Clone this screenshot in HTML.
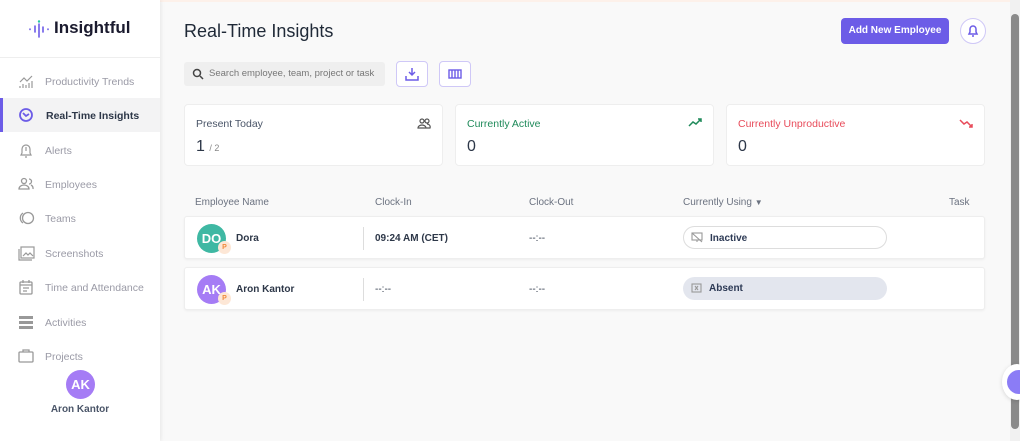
<!DOCTYPE html>
<html><head><style>
*{box-sizing:border-box;margin:0;padding:0}
body{width:1020px;height:441px;overflow:hidden;background:#f9f9f9;font-family:"Liberation Sans",sans-serif;position:relative;color:#2d3748}
.sb{position:absolute;left:0;top:0;width:160px;height:441px;background:#fff;box-shadow:1px 0 4px rgba(0,0,0,.08)}
.logo{position:absolute;left:0;top:0;width:160px;height:58px;border-bottom:1px solid #eee}
.logo span{position:absolute;left:54px;top:18px;font-size:17px;font-weight:bold;color:#1a1a2e}
.it{position:absolute;left:0;width:160px;height:34px;font-size:10.5px;color:#9a9aa6}
.it span{position:absolute;left:45px;top:12px}
.it svg{position:absolute;left:18px;top:9px}
.act{background:#f3f3f4;color:#2d3748;font-weight:bold;border-left:3px solid #6c5ce7}
.av{position:absolute;border-radius:50%;color:#fff;font-weight:bold;text-align:center}
.abs{position:absolute}
.card{position:absolute;top:104px;width:259px;height:62px;background:#fff;border:1px solid #eee;border-radius:4px}
.card .t{position:absolute;left:11px;top:13px;font-size:10.5px}
.card .n{position:absolute;left:11px;top:33px;font-size:16px;color:#2d3748}
.row{position:absolute;left:184px;width:801px;height:43px;background:#fff;border:1px solid #eee;border-radius:3px;box-shadow:0 1px 2px rgba(0,0,0,.05)}
.th{position:absolute;top:197px;font-size:10px;color:#6b7280}
.txt{position:absolute;font-size:10px;font-weight:bold;color:#2d3748}
.pill{position:absolute;left:498px;top:9px;width:204px;height:23px;border-radius:12px;font-size:10px;font-weight:bold;color:#2d3a55}
.pill span{position:absolute;left:26px;top:6px}
.badge{position:absolute;width:13px;height:13px;border-radius:50%;background:#fde7d6;color:#f08a3c;font-size:7px;font-weight:bold;text-align:center;line-height:13px}
</style></head><body>
<div class="abs" style="left:0;top:0;width:1020px;height:2px;background:#fdf1ea"></div>
<div class="sb">
 <div class="logo">
  <svg class="abs" style="left:28px;top:20px" width="22" height="18"><g stroke="#6c5ce7" stroke-width="1.6" stroke-linecap="round"><line x1="2" y1="9" x2="2" y2="9.5"/><line x1="7" y1="6" x2="7" y2="12"/><line x1="11" y1="4" x2="11" y2="17"/><line x1="15" y1="7" x2="15" y2="12"/><line x1="20" y1="9" x2="20" y2="9.5"/></g><circle cx="11" cy="1.5" r="1.2" fill="#27c6a5"/></svg>
  <span>Insightful</span>
 </div>
 <div class="it" style="top:64px"><svg width="16" height="16" fill="none" stroke="#999" stroke-width="1.2"><path d="M2 9l4-4 3 3 5-5M2 15v-2M5 15v-4M8 15v-3M11 15v-5M14 15v-7"/></svg><span>Productivity Trends</span></div>
 <div class="it act" style="top:98px"><svg width="16" height="16" style="left:15px" fill="none" stroke="#6c5ce7" stroke-width="1.8"><circle cx="8" cy="8" r="6"/><path d="M5 6l3 3 3-2"/></svg><span style="left:43px">Real-Time Insights</span></div>
 <div class="it" style="top:133px"><svg width="16" height="16" fill="none" stroke="#999" stroke-width="1.2"><path d="M3 13h10l-1-2V7a4 4 0 00-8 0v4zM8 5v4M7 15h2"/></svg><span>Alerts</span></div>
 <div class="it" style="top:167px"><svg width="16" height="16" fill="none" stroke="#999" stroke-width="1.3"><circle cx="6" cy="5" r="2.5"/><path d="M1 13a5 4 0 0110 0zM11 3a2.5 2.5 0 010 5M13 9a4 4 0 012 4"/></svg><span>Employees</span></div>
 <div class="it" style="top:201px"><svg width="18" height="16" fill="none" stroke="#999" stroke-width="1.3"><circle cx="10" cy="8" r="5.5"/><path d="M5 3a6 6 0 000 10"/></svg><span>Teams</span></div>
 <div class="it" style="top:236px"><svg width="18" height="16" fill="none" stroke="#999" stroke-width="1.2"><rect x="3" y="2" width="13" height="11"/><path d="M1 4v11h13M5 11l3-3 2 2 2-2 3 3"/></svg><span>Screenshots</span></div>
 <div class="it" style="top:270px"><svg width="16" height="16" fill="none" stroke="#999" stroke-width="1.3"><rect x="2" y="3" width="12" height="12" rx="1"/><path d="M5 1v3M11 1v3M2 6h12M5 9h6M5 12h4"/></svg><span>Time and Attendance</span></div>
 <div class="it" style="top:305px"><svg width="16" height="16" fill="#999"><rect x="1" y="2" width="14" height="3"/><rect x="1" y="7" width="14" height="3"/><rect x="1" y="12" width="14" height="3"/></svg><span>Activities</span></div>
 <div class="it" style="top:339px"><svg width="16" height="16" fill="none" stroke="#999" stroke-width="1.3"><rect x="1" y="4" width="14" height="10" rx="1"/><path d="M5 4V2h6v2"/></svg><span>Projects</span></div>
 <div class="av" style="left:66px;top:370px;width:29px;height:29px;background:#a57cf5;font-size:13px;line-height:29px">AK</div>
 <div class="abs" style="left:0;width:160px;top:404px;text-align:center;font-size:10px;font-weight:bold;color:#4a5568">Aron Kantor</div>
</div>
<div class="abs" style="left:184px;top:21px;font-size:18px;color:#1f2937">Real-Time Insights</div>
<div class="abs" style="left:841px;top:18px;width:108px;height:26px;background:#6c5ce7;border-radius:4px;color:#fff;font-size:10px;font-weight:bold;text-align:center;line-height:26px">Add New Employee</div>
<div class="abs" style="left:960px;top:18px;width:26px;height:26px;border-radius:50%;border:1px solid #cfc8f7;background:#fff"><svg width="24" height="24"><path d="M8 15h8l-1-2v-3a3 3 0 00-6 0v3zM11 17h2" fill="none" stroke="#6c5ce7" stroke-width="1.5"/></svg></div>
<div class="abs" style="left:184px;top:62px;width:201px;height:24px;background:#efefef;border-radius:3px"><svg class="abs" style="left:8px;top:6px" width="12" height="12" fill="none" stroke="#444" stroke-width="1.5"><circle cx="5" cy="5" r="3.5"/><path d="M8 8l3 3"/></svg><span class="abs" style="left:25px;top:6px;font-size:9.5px;color:#777">Search employee, team, project or task</span></div>
<div class="abs" style="left:396px;top:61px;width:32px;height:26px;border:1px solid #cfc8f7;border-radius:4px;background:#fff"><svg class="abs" style="left:8px;top:5px" width="14" height="14" fill="none" stroke="#6c5ce7" stroke-width="1.5"><path d="M7 1v7M4 5l3 3 3-3M1 9v4h12V9"/></svg></div>
<div class="abs" style="left:439px;top:61px;width:32px;height:26px;border:1px solid #cfc8f7;border-radius:4px;background:#fff"><svg class="abs" style="left:8px;top:6px" width="14" height="12" fill="none" stroke="#6c5ce7" stroke-width="1.4"><rect x="1" y="2" width="12" height="8"/><path d="M4 2v8M7 2v8M10 2v8"/></svg></div>
<div class="card" style="left:184px"><span class="t" style="color:#4a5568">Present Today</span><span class="n">1 <small style="font-size:9px;color:#888">/ 2</small></span><svg class="abs" style="left:232px;top:12px" width="14" height="12" fill="none" stroke="#555" stroke-width="1.2"><circle cx="5" cy="4" r="2"/><circle cx="10" cy="4" r="2"/><path d="M1 11a4 3 0 018 0zM9 11h4a3 3 0 00-3-4"/></svg></div>
<div class="card" style="left:455px"><span class="t" style="color:#1f8a5a">Currently Active</span><span class="n">0</span><svg class="abs" style="left:232px;top:13px" width="14" height="10" fill="none" stroke="#1f8a5a" stroke-width="1.5"><path d="M1 8l4-4 3 2 5-5M10 1h3v3"/></svg></div>
<div class="card" style="left:726px"><span class="t" style="color:#e84b5a">Currently Unproductive</span><span class="n">0</span><svg class="abs" style="left:232px;top:13px" width="14" height="10" fill="none" stroke="#e84b5a" stroke-width="1.5"><path d="M1 2l4 4 3-2 5 5M10 9h3V6"/></svg></div>
<span class="th" style="left:195px">Employee Name</span><span class="th" style="left:375px">Clock-In</span><span class="th" style="left:529px">Clock-Out</span><span class="th" style="left:683px">Currently Using <span style="font-size:8px">▼</span></span><span class="th" style="left:949px">Task</span>
<div class="row" style="top:216px">
 <div class="av" style="left:12px;top:7px;width:29px;height:29px;background:#3fb8a3;font-size:13px;line-height:29px">DO</div><div class="badge" style="left:33px;top:24px">P</div>
 <span class="txt" style="left:51px;top:16px">Dora</span>
 <div class="abs" style="left:178px;top:10px;width:1px;height:23px;background:#ddd"></div>
 <span class="txt" style="left:190px;top:16px">09:24 AM (CET)</span>
 <span class="txt" style="left:344px;top:16px;font-weight:normal">--:--</span>
 <div class="pill" style="border:1px solid #ddd;background:#fff"><svg class="abs" style="left:7px;top:5px" width="12" height="11" fill="none" stroke="#999" stroke-width="1.1"><rect x="1" y="1" width="10" height="7"/><path d="M1 1l10 9M6 8v2"/></svg><span>Inactive</span></div>
</div>
<div class="row" style="top:267px">
 <div class="av" style="left:12px;top:7px;width:29px;height:29px;background:#a57cf5;font-size:13px;line-height:29px">AK</div><div class="badge" style="left:33px;top:24px">P</div>
 <span class="txt" style="left:51px;top:16px">Aron Kantor</span>
 <div class="abs" style="left:178px;top:10px;width:1px;height:23px;background:#ddd"></div>
 <span class="txt" style="left:190px;top:16px;font-weight:normal">--:--</span>
 <span class="txt" style="left:344px;top:16px;font-weight:normal">--:--</span>
 <div class="pill" style="background:#e3e6ee"><svg class="abs" style="left:8px;top:6px" width="11" height="10" fill="none" stroke="#999" stroke-width="1.1"><rect x="1" y="1" width="9" height="8"/><path d="M4 3l3 4M7 3l-3 4"/></svg><span>Absent</span></div>
</div>
<div class="abs" style="left:1010px;top:0;width:10px;height:441px;background:#f1f1f1"></div>
<div class="abs" style="left:1011px;top:14px;width:8px;height:415px;background:#8a8a8a;border-radius:4px"></div>
<div class="abs" style="left:1002px;top:364px;width:30px;height:36px;border-radius:50%;background:#fff;box-shadow:0 1px 4px rgba(0,0,0,.15)"><div class="abs" style="left:5px;top:6px;width:24px;height:24px;border-radius:50%;background:#8b7cf6"></div></div>
</body></html>
